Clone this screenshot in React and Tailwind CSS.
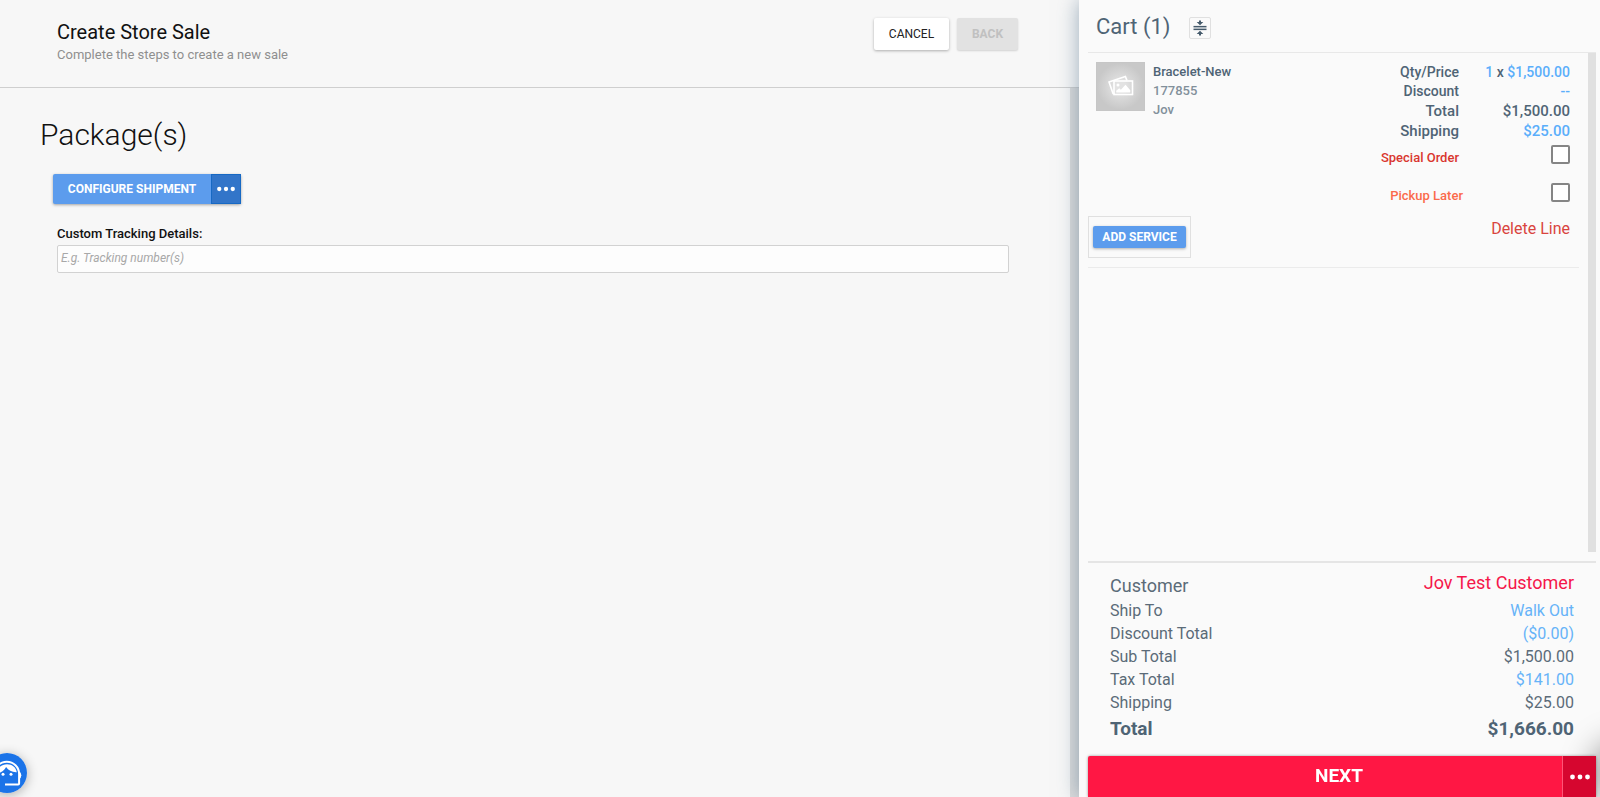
const cartFigures = [
  { label: "Qty/Price", rowClass: "text-sm leading-[19px]", value: <><a href="#qty" className="text-[#5aaefa]">1</a> x <a href="#price" className="text-[#5aaefa]">$1,500.00</a></> },
  { label: "Discount", rowClass: "text-sm leading-[19px]", value: <a href="#discount" className="text-[#5aaefa]">--</a> },
  { label: "Total", rowClass: "text-[15px] leading-5", value: "$1,500.00" },
  { label: "Shipping", rowClass: "text-[15px] leading-5", value: <a href="#shipping" className="text-[#5aaefa]">$25.00</a> },
];

const totals = [
  { label: "Ship To", value: "Walk Out", href: "#ship-to" },
  { label: "Discount Total", value: "($0.00)", href: "#discount-total" },
  { label: "Sub Total", value: "$1,500.00" },
  { label: "Tax Total", value: "$141.00", href: "#tax-total" },
  { label: "Shipping", value: "$25.00" },
];

function Dots({ className }) {
  return (
    <svg viewBox="0 0 20 6" fill="currentColor" className={className} aria-hidden="true">
      <circle cx="2.500" cy="3" r="2.400" />
      <circle cx="10" cy="3" r="2.400" />
      <circle cx="17.500" cy="3" r="2.400" />
    </svg>
  );
}

function CollapseIcon() {
  return (
    <svg viewBox="0 0 14 16" className="h-4 w-3.5" fill="#455a6b" aria-hidden="true">
      <path d="M6 0.500h2v1.500h2.300L7 5.200 3.700 2H6z" />
      <path d="M6 15.500h2v-1.500h2.300L7 10.800 3.700 14H6z" />
      <rect x="0.500" y="5.900" width="13" height="1.500" />
      <rect x="0.500" y="8.600" width="13" height="1.500" />
    </svg>
  );
}

function Thumbnail() {
  return (
    <div className="flex size-[49px] shrink-0 items-center justify-center border border-[#c6c6c6] bg-[radial-gradient(circle,#e2e2e2_15%,#c8c8c8_70%)]">
      <svg viewBox="0 0 26 24" className="h-6 w-[26px]" fill="none" stroke="#fff" strokeWidth="1.6" aria-hidden="true">
        <path d="M6.500 18.500H5L1 7 17.400 1.400l1.500 4" />
        <rect x="6" y="6" width="18.500" height="13.500" />
        <circle cx="10" cy="10" r="1.500" fill="#fff" stroke="none" />
        <path d="M8.200 17.500v-1.800l3-2.400 1.700 1.400 4.600-5 4.800 5.600v2.200z" fill="#fff" stroke="none" />
      </svg>
    </div>
  );
}

function SupportIcon() {
  return (
    <svg viewBox="0 0 40 40" className="size-10" fill="none" aria-hidden="true">
      <circle cx="20" cy="20" r="20" fill="#1a73e8" />
      <path d="M7.500 22v-1a12.300 12.300 0 0 1 24.600 0v9.500q0 1-1 1H18" stroke="#fff" strokeWidth="2" />
      <path d="M32 18.500q2.300.8 2.300 3.800t-2.300 3.800z" fill="#fff" />
      <path d="M10 20.500c0-5.500 4.500-9.300 10-9.300 5.300 0 9 3.200 9.800 8-4.800.2-8.300-1.700-10.700-5.200-1.500 3.200-5 5.800-9.100 6.500z" fill="#fff" />
      <circle cx="16" cy="21.300" r="1.500" fill="#fff" />
      <circle cx="24" cy="21.300" r="1.500" fill="#fff" />
    </svg>
  );
}

function CheckRow({ id, label, className }) {
  return (
    <div className="flex h-[38px] items-start justify-between">
      <label htmlFor={id} className={className}>{label}</label>
      <input id={id} type="checkbox" className="size-[19px] appearance-none rounded-xs border-2 border-[#858585] bg-white checked:bg-[#5c9ced]" />
    </div>
  );
}

function Main() {
  return (
    <main className="flex min-w-0 flex-1 flex-col bg-[#f7f7f7]">
      <header className="flex h-[88px] shrink-0 items-start justify-between border-b border-[#cfcfcf] pt-[18px] pr-[61px] pl-[57px]">
        <div>
          <h1 className="text-xl leading-7 text-[#111]">Create Store Sale</h1>
          <p className="text-[13px] leading-[18px] text-[#8f8f8f]">Complete the steps to create a new sale</p>
        </div>
        <div className="flex gap-2">
          <button type="button" className="h-8 w-[75px] rounded-xs bg-white text-xs text-[#222] shadow-[0_1px_3px_rgba(0,0,0,0.3)]">CANCEL</button>
          <button type="button" disabled className="h-8 w-[61px] rounded-xs bg-[#e2e2e2] text-xs font-bold text-[#c0c0c0] shadow-[0_1px_2px_rgba(0,0,0,0.15)]">BACK</button>
        </div>
      </header>
      <div className="flex min-h-0 flex-1">
        <div className="min-w-0 flex-1 pt-7 pr-[61px] pl-10">
          <h2 className="text-3xl leading-[38px] font-light text-[#111]">Package(s)</h2>
          <div className="mt-5 ml-[13px] flex h-[30px] w-fit rounded-xs bg-[#5c9ced] text-white shadow-[0_1px_3px_rgba(0,0,0,0.35)]">
            <button type="button" className="w-[158px] text-xs font-bold">CONFIGURE SHIPMENT</button>
            <button type="button" aria-label="More shipment options" className="flex w-[30px] items-center justify-center border border-[#1769c4] bg-[#3275c9]">
              <Dots className="h-[6px] w-[18px]" />
            </button>
          </div>
          <div className="mt-[22px] ml-[17px]">
            <label htmlFor="tracking" className="block text-[13px] leading-4 font-medium text-[#111]">Custom Tracking Details:</label>
            <input id="tracking" type="text" placeholder="E.g. Tracking number(s)" className="mt-[3px] block h-7 w-full rounded-xs border border-[#d2d2d2] bg-[#fdfdfd] px-[3px] pb-[2px] text-xs placeholder:text-[#a8a8a8] placeholder:italic" />
          </div>
        </div>
        <div className="w-[9px] shrink-0 bg-[#dcdcdc]" />
      </div>
    </main>
  );
}

function CartLine() {
  return (
    <article className="mr-[9px] flex justify-between border-b border-[#ebebeb] pt-[9px] pb-[9px]">
      <div className="flex flex-col justify-between">
        <div className="flex gap-2 pl-2">
          <Thumbnail />
          <div className="text-[13px] leading-[19px] font-medium text-[#82909a]">
            <p className="text-[#4f6475]">Bracelet-New</p>
            <p>177855</p>
            <p>Jov</p>
          </div>
        </div>
        <div className="w-fit border border-[#e0e0e0] px-1 py-[9px]">
          <button type="button" className="block h-[22px] w-[93px] rounded-xs bg-[#5c9ced] text-xs font-bold text-white shadow-[0_1px_3px_rgba(0,0,0,0.3)]">ADD SERVICE</button>
        </div>
      </div>
      <div className="w-56 pt-px pr-[9px] pb-[18px] font-medium text-[#4f6475]">
        {cartFigures.map(({ label, value, rowClass }) => (
          <div key={label} className={`flex ${rowClass}`}>
            <span className="w-[104px] text-right">{label}</span>
            <span className="flex-1 text-right">{value}</span>
          </div>
        ))}
        <div className="mt-1">
          <CheckRow id="special-order" label="Special Order" className="w-[104px] pt-[3px] text-right text-[13px] leading-5 text-[#d9362f]" />
          <CheckRow id="pickup-later" label="Pickup Later" className="w-[108px] pt-[3px] text-right text-[13px] leading-5 text-[#fb6a4b]" />
        </div>
        <button type="button" className="-mt-[3px] block w-full text-right text-base leading-[22px] font-normal text-[#d9443e]">Delete Line</button>
      </div>
    </article>
  );
}

function Cart() {
  return (
    <aside className="relative flex w-[521px] shrink-0 flex-col bg-[#fafafa] pr-1 pl-[9px] text-[#5b6b78] shadow-[0_0_20px_rgba(60,95,125,0.5)]">
      <header className="flex h-[53px] shrink-0 items-center gap-[18px] border-b border-[#e8e8e8] pt-[2px] pl-2">
        <h2 className="text-[22px] leading-7 text-[#4f6475]">Cart (1)</h2>
        <button type="button" aria-label="Collapse cart lines" className="mt-[2px] flex size-[22px] items-center justify-center rounded-xs border border-[#e0e0e0]">
          <CollapseIcon />
        </button>
      </header>
      <div className="flex min-h-0 flex-1">
        <div className="min-w-0 flex-1"><CartLine /></div>
        <div className="mb-[9px] w-2 shrink-0 bg-[#e0e0e0]" />
      </div>
      <section className="shrink-0 border-t-2 border-[#e5e5e5] px-[22px] pt-[10px] pb-3 text-base leading-[23px]">
        <div className="flex justify-between pb-[3px] text-lg leading-[23px]">
          <span className="pt-[3px] leading-5">Customer</span>
          <a href="#customer" className="leading-5 text-[#f5174a]">Jov Test Customer</a>
        </div>
        {totals.map(({ label, value, href }) => (
          <div key={label} className="flex justify-between">
            <span>{label}</span>
            {href ? <a href={href} className="text-[#66b3f8]">{value}</a> : <span>{value}</span>}
          </div>
        ))}
        <div className="flex justify-between text-[19px] leading-[30px] font-bold text-[#4f6475]">
          <span>Total</span>
          <span>$1,666.00</span>
        </div>
      </section>
      <div className="pointer-events-none fixed -right-12 bottom-0 size-12 rounded-full shadow-[0_0_32px_8px_rgba(0,0,0,0.4)]" />
      <div className="relative flex h-[41px] shrink-0 rounded-t-xs bg-[#ff1744] text-white shadow-[0_0_3px_rgba(0,0,0,0.4)]">
        <button type="button" className="flex-1 pl-7 text-[19px] font-bold">NEXT</button>
        <button type="button" aria-label="More checkout options" className="flex w-[34px] items-center justify-center border-l border-[#ff5577] bg-[#d6062f]">
          <Dots className="h-[6px] w-5" />
        </button>
      </div>
    </aside>
  );
}

export default function App() {
  return (
    <div className="flex h-screen overflow-hidden font-['Roboto',sans-serif]">
      <Main />
      <Cart />
      <button type="button" aria-label="Support" className="fixed bottom-1 -left-[13px] rounded-full shadow-[0_2px_12px_rgba(0,0,0,0.3)]">
        <SupportIcon />
      </button>
    </div>
  );
}
